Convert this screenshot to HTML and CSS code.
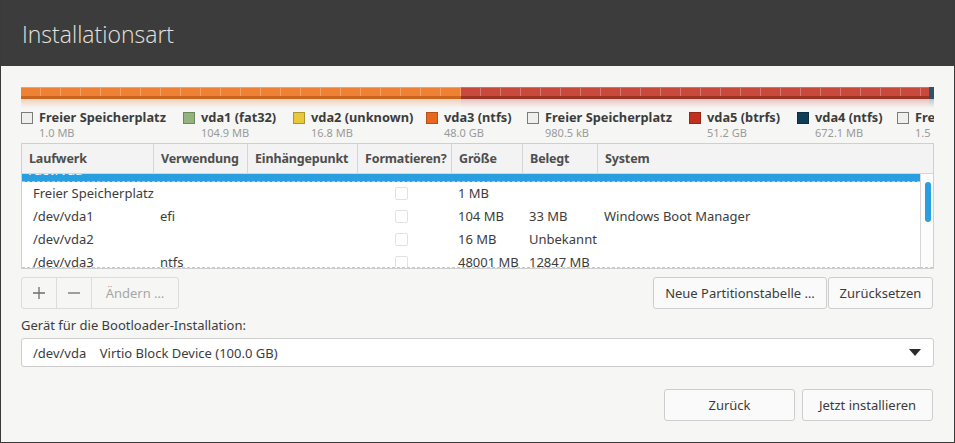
FILE: index.html
```html
<!DOCTYPE html>
<html lang="de">
<head>
    <meta charset="UTF-8">
    <title>Installationsart</title>
    <link rel="stylesheet" href="styles.css">
</head>
<body>
    <div class="window">
        <div class="titlebar">Installationsart</div>
        <div class="content">
            <div class="partbar">
                <div class="seg seg-orange"></div>
                <div class="seg seg-red"></div>
                <div class="seg seg-teal"></div>
            </div>
            <div class="legend">
                <div class="item"><span class="sw sw-free"></span><div><b>Freier Speicherplatz</b><small>1.0 MB</small></div></div>
                <div class="item"><span class="sw sw-green"></span><div><b>vda1 (fat32)</b><small>104.9 MB</small></div></div>
                <div class="item"><span class="sw sw-yellow"></span><div><b>vda2 (unknown)</b><small>16.8 MB</small></div></div>
                <div class="item"><span class="sw sw-orange"></span><div><b>vda3 (ntfs)</b><small>48.0 GB</small></div></div>
                <div class="item"><span class="sw sw-free"></span><div><b>Freier Speicherplatz</b><small>980.5 kB</small></div></div>
                <div class="item"><span class="sw sw-red"></span><div><b>vda5 (btrfs)</b><small>51.2 GB</small></div></div>
                <div class="item"><span class="sw sw-navy"></span><div><b>vda4 (ntfs)</b><small>672.1 MB</small></div></div>
                <div class="item"><span class="sw sw-free"></span><div><b>Freier Speicherplatz</b><small>1.5 MB</small></div></div>
            </div>

            <div class="table">
                <div class="thead">
                    <div>Laufwerk</div>
                    <div>Verwendung</div>
                    <div>Einhängepunkt</div>
                    <div>Formatieren?</div>
                    <div>Größe</div>
                    <div>Belegt</div>
                    <div>System</div>
                </div>
                <div class="tbody">
                    <div class="rows">
                        <div class="row selected"><div>/dev/vda</div></div>
                        <div class="row"><div class="indent">Freier Speicherplatz</div><div></div><div></div><div><span class="check"></span></div><div>1 MB</div><div></div><div></div></div>
                        <div class="row"><div class="indent">/dev/vda1</div><div>efi</div><div></div><div><span class="check"></span></div><div>104 MB</div><div>33 MB</div><div>Windows Boot Manager</div></div>
                        <div class="row"><div class="indent">/dev/vda2</div><div></div><div></div><div><span class="check"></span></div><div>16 MB</div><div>Unbekannt</div><div></div></div>
                        <div class="row"><div class="indent">/dev/vda3</div><div>ntfs</div><div></div><div><span class="check"></span></div><div>48001 MB</div><div>12847 MB</div><div></div></div>
                    </div>
                    <div class="scrollbar"><div class="thumb"></div></div>
                </div>
            </div>

            <div class="toolbar">
                <div class="btn-group">
                    <button class="icon-btn">
                        <svg width="14" height="14" viewBox="0 0 14 14"><path d="M7 1v12M1 7h12" stroke="#6e6e6e" stroke-width="1.3"/></svg>
                    </button>
                    <button class="icon-btn">
                        <svg width="14" height="14" viewBox="0 0 14 14"><path d="M1 7h12" stroke="#6e6e6e" stroke-width="1.3"/></svg>
                    </button>
                    <button class="edit-btn" disabled>Ändern …</button>
                </div>
                <div class="right-group">
                    <button class="btn btn-table">Neue Partitionstabelle …</button>
                    <button class="btn btn-reset">Zurücksetzen</button>
                </div>
            </div>

            <div class="boot-label">Gerät für die Bootloader-Installation:</div>
            <div class="combo">
                <span>/dev/vda&nbsp;&nbsp;&nbsp; Virtio Block Device (100.0 GB)</span>
                <svg width="12" height="7" viewBox="0 0 12 7"><path d="M0 0h12L6 7z" fill="#2d2d2d"/></svg>
            </div>

            <div class="footer">
                <button class="btn btn-back">Zurück</button>
                <button class="btn btn-install">Jetzt installieren</button>
            </div>
        </div>
    </div>
</body>
</html>
```

FILE: styles.css
```css
* {
    box-sizing: border-box;
}
body {
    margin: 0;
    font-family: "Noto Sans", "DejaVu Sans", sans-serif;
    font-size: 13px;
    color: #3c3c3c;
    background: #3c3c3c;
}
.window {
    width: 955px;
    height: 443px;
    border: 1px solid #3a3a3a;
    border-top: none;
    display: flex;
    flex-direction: column;
    overflow: hidden;
}
.titlebar {
    height: 66px;
    flex: none;
    background: #3c3c3c;
    color: #e4e2dc;
    font-family: "Open Sans", "Noto Sans", sans-serif;
    font-weight: 300;
    font-size: 23px;
    padding-left: 21px;
    line-height: 68px;
}
.content {
    flex: 1;
    background: #f6f6f5;
    padding: 21px 20px 0 20px;
}

/* partition bar */
.partbar {
    display: flex;
    height: 12px;
    margin-bottom: 10px;
}
.seg {
    position: relative;
    height: 12px;
    background-image: repeating-linear-gradient(90deg, transparent 0, transparent 19px, rgba(255,255,255,0.25) 19px, rgba(255,255,255,0.25) 20px);
}
.seg::after {
    content: "";
    position: absolute;
    left: 0;
    right: 0;
    top: 12px;
    height: 9px;
    opacity: 0.3;
}
.seg-orange {
    width: 440px;
    background-color: #ee8133;
    box-shadow: inset 0 -3px 0 #c9651f, inset 0 1px 0 #f5a060;
}
.seg-orange::after { background: linear-gradient(#e87a30, transparent); }
.seg-red {
    width: 468px;
    background-color: #c9493c;
    box-shadow: inset 0 -3px 0 #9f3226, inset 0 1px 0 #dc6c60;
}
.seg-red::after { background: linear-gradient(#c9493c, transparent); }
.seg-teal {
    width: 5px;
    background-color: #2b5468;
}
.seg-teal::after { background: linear-gradient(#2b5468, transparent); }

.legend {
    display: grid;
    grid-template-columns: 162px 110px 133px 101px 162px 108px 100px 1fr;
    white-space: nowrap;
    overflow: hidden;
    height: 30px;
    margin-bottom: 4px;
}
.item {
    display: flex;
    overflow: hidden;
}
.item b {
    display: block;
    font-weight: 700;
    font-size: 12.8px;
    color: #3c3c3c;
    line-height: 17px;
}
.item small {
    display: block;
    font-size: 11px;
    color: #9a9a9a;
    line-height: 13px;
}
.sw {
    width: 12px;
    height: 12px;
    border: 1px solid #7b7b7b;
    margin: 3px 6px 0 0;
    flex: none;
}
.sw-free { background: #efefec; }
.sw-green { background: #94b37f; border-color: #6b8a58; }
.sw-yellow { background: #e9c93a; border-color: #ad962c; }
.sw-orange { background: #e8661d; border-color: #b4501a; }
.sw-red { background: #c3301d; border-color: #94271a; }
.sw-navy { background: #0f3d57; border-color: #0b2e42; }

/* table */
.table {
    border: 1px solid #cfcfcf;
    background: #fff;
}
.thead, .row {
    display: grid;
    grid-template-columns: 131px 94px 110px 94px 71px 75px 1fr;
}
.thead {
    height: 30px;
    background: #f3f3f3;
    border-bottom: 1px solid #d6d6d6;
    font-weight: 700;
    font-size: 12.5px;
    letter-spacing: -0.15px;
    color: #4e4e4e;
}
.thead div {
    line-height: 29px;
    padding-left: 7px;
    border-left: 1px solid #d6d6d6;
    white-space: nowrap;
    overflow: hidden;
}
.thead div:first-child { border-left: none; }
.tbody {
    display: flex;
    height: 94px;
}
.rows {
    flex: 1;
    overflow: hidden;
    border-bottom: 1px dashed #c8c8c8;
}
.row {
    height: 23px;
    line-height: 22px;
}
.row div {
    padding-left: 7px;
    white-space: nowrap;
}
.row .indent { padding-left: 11px; }
.row.selected {
    display: block;
    margin-top: -15px;
    background: #2a9fe0;
    color: #fff;
    border-bottom: 1px dashed #8ccdf0;
    height: 23px;
}
.row div:nth-child(4) {
    padding-left: 38px;
}
.check {
    display: inline-block;
    width: 13px;
    height: 13px;
    border: 1px solid #e2e2e2;
    border-radius: 2px;
    vertical-align: middle;
    margin-top: -2px;
}
.scrollbar {
    width: 13px;
    border-left: 1px solid #d6d6d6;
    background: #fcfcfc;
    border-bottom: 1px dashed #c8c8c8;
}
.thumb {
    width: 6px;
    height: 40px;
    margin: 8px 0 0 4px;
    border-radius: 3px;
    background: #2a9fe0;
}

/* buttons */
button {
    font-family: inherit;
    font-size: 13px;
    color: #3c3c3c;
    background: #fafafa;
    border: 1px solid #cdcdcd;
    border-radius: 3px;
    padding: 0;
    cursor: pointer;
}
.toolbar {
    display: flex;
    justify-content: space-between;
    margin-top: 8px;
}
.btn-group {
    display: flex;
    height: 32px;
    border: 1px solid #dcdcdc;
    border-radius: 3px;
    background: #f6f6f5;
}
.btn-group button {
    border: none;
    border-radius: 0;
    background: transparent;
    height: 30px;
}
.icon-btn {
    width: 35px;
    border-right: 1px solid #dcdcdc !important;
    display: flex;
    align-items: center;
    justify-content: center;
}
.edit-btn {
    width: 86px;
    color: #a6a6a6 !important;
}
.right-group {
    display: flex;
    gap: 1px;
    margin-right: 1px;
}
.btn {
    height: 32px;
}
.btn-table { width: 174px; }
.btn-reset { width: 105px; }

.boot-label {
    margin-top: 7px;
    line-height: 18px;
}
.combo {
    margin-top: 4px;
    height: 29px;
    border: 1px solid #cdcdcd;
    border-radius: 3px;
    background: #fff;
    display: flex;
    align-items: center;
    justify-content: space-between;
    padding: 0 12px 0 11px;
}
.footer {
    display: flex;
    justify-content: flex-end;
    gap: 7px;
    margin-top: 22px;
    margin-right: 1px;
}
.btn-back { width: 131px; }
.btn-install { width: 131px; }
```
